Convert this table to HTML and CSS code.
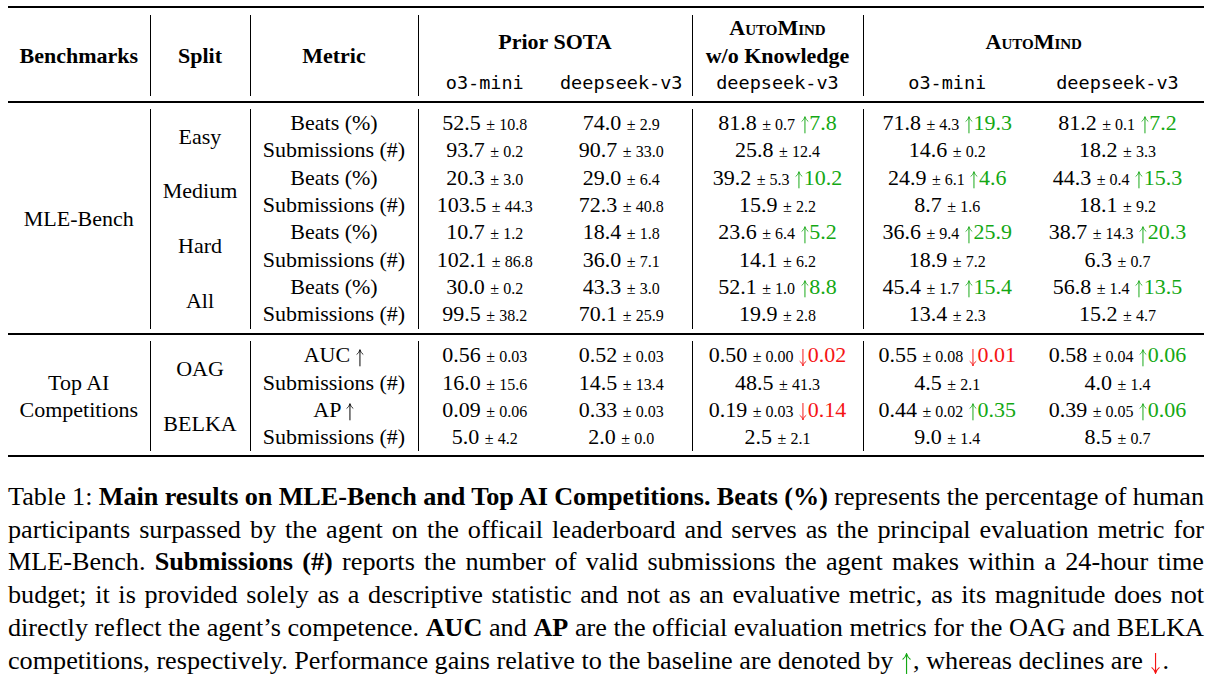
FILE: index.html
```html
<!DOCTYPE html>
<html>
<head>
<meta charset="utf-8">
<link rel="stylesheet" href="styles.css">
</head>
<body>
<svg width="0" height="0" class="defs" aria-hidden="true">
  <defs>
    <symbol id="arrow-up" viewBox="0 0 8 18">
      <path d="M4 1.2V18" fill="none" stroke="currentColor" stroke-width="1"/>
      <path d="M0.6 5.6C2.2 4.4 3.4 2.8 4 0.6C4.6 2.8 5.8 4.4 7.4 5.6" fill="none" stroke="currentColor" stroke-width="0.9"/>
    </symbol>
    <symbol id="arrow-down" viewBox="0 0 8 18">
      <path d="M4 0V16.8" fill="none" stroke="currentColor" stroke-width="1"/>
      <path d="M0.6 12.4C2.2 13.6 3.4 15.2 4 17.4C4.6 15.2 5.8 13.6 7.4 12.4" fill="none" stroke="currentColor" stroke-width="0.9"/>
    </symbol>
  </defs>
</svg>
<table class="results">
  <colgroup>
    <col class="c-bench"><col class="c-split"><col class="c-metric"><col class="c-p1"><col class="c-p2"><col class="c-wo"><col class="c-a1"><col class="c-a2">
  </colgroup>
  <tbody>
    <tr class="rule"><td colspan="8"></td></tr>
    <tr class="gap"><td colspan="8"></td></tr>
    <tr>
      <th rowspan="3">Benchmarks</th>
      <th rowspan="3" class="vl">Split</th>
      <th rowspan="3" class="vl">Metric</th>
      <th rowspan="2" colspan="2" class="vl">Prior SOTA</th>
      <th class="vl sc top">AutoMind</th>
      <th rowspan="2" colspan="2" class="vl sc">AutoMind</th>
    </tr>
    <tr><th class="vl">w/o Knowledge</th></tr>
    <tr>
      <td class="vl mono">o3-mini</td><td class="mono">deepseek-v3</td>
      <td class="vl mono">deepseek-v3</td>
      <td class="vl mono">o3-mini</td><td class="mono">deepseek-v3</td>
    </tr>
    <tr class="gap short"><td colspan="8"></td></tr>
    <tr class="rule"><td colspan="8"></td></tr>
    <tr class="gap"><td colspan="8"></td></tr>

    <tr>
      <td rowspan="8">MLE-Bench</td>
      <td rowspan="2" class="vl">Easy</td>
      <td class="vl">Beats (%)</td>
      <td class="vl">52.5 <small>± 10.8</small></td><td>74.0 <small>± 2.9</small></td>
      <td class="vl">81.8 <small>± 0.7</small> <span class="up"><svg class="arr"><use href="#arrow-up"/></svg>7.8</span></td>
      <td class="vl">71.8 <small>± 4.3</small> <span class="up"><svg class="arr"><use href="#arrow-up"/></svg>19.3</span></td><td>81.2 <small>± 0.1</small> <span class="up"><svg class="arr"><use href="#arrow-up"/></svg>7.2</span></td>
    </tr>
    <tr>
      <td class="vl">Submissions (#)</td>
      <td class="vl">93.7 <small>± 0.2</small></td><td>90.7 <small>± 33.0</small></td>
      <td class="vl">25.8 <small>± 12.4</small></td>
      <td class="vl">14.6 <small>± 0.2</small></td><td>18.2 <small>± 3.3</small></td>
    </tr>
    <tr>
      <td rowspan="2" class="vl">Medium</td>
      <td class="vl">Beats (%)</td>
      <td class="vl">20.3 <small>± 3.0</small></td><td>29.0 <small>± 6.4</small></td>
      <td class="vl">39.2 <small>± 5.3</small> <span class="up"><svg class="arr"><use href="#arrow-up"/></svg>10.2</span></td>
      <td class="vl">24.9 <small>± 6.1</small> <span class="up"><svg class="arr"><use href="#arrow-up"/></svg>4.6</span></td><td>44.3 <small>± 0.4</small> <span class="up"><svg class="arr"><use href="#arrow-up"/></svg>15.3</span></td>
    </tr>
    <tr>
      <td class="vl">Submissions (#)</td>
      <td class="vl">103.5 <small>± 44.3</small></td><td>72.3 <small>± 40.8</small></td>
      <td class="vl">15.9 <small>± 2.2</small></td>
      <td class="vl">8.7 <small>± 1.6</small></td><td>18.1 <small>± 9.2</small></td>
    </tr>
    <tr>
      <td rowspan="2" class="vl">Hard</td>
      <td class="vl">Beats (%)</td>
      <td class="vl">10.7 <small>± 1.2</small></td><td>18.4 <small>± 1.8</small></td>
      <td class="vl">23.6 <small>± 6.4</small> <span class="up"><svg class="arr"><use href="#arrow-up"/></svg>5.2</span></td>
      <td class="vl">36.6 <small>± 9.4</small> <span class="up"><svg class="arr"><use href="#arrow-up"/></svg>25.9</span></td><td>38.7 <small>± 14.3</small> <span class="up"><svg class="arr"><use href="#arrow-up"/></svg>20.3</span></td>
    </tr>
    <tr>
      <td class="vl">Submissions (#)</td>
      <td class="vl">102.1 <small>± 86.8</small></td><td>36.0 <small>± 7.1</small></td>
      <td class="vl">14.1 <small>± 6.2</small></td>
      <td class="vl">18.9 <small>± 7.2</small></td><td>6.3 <small>± 0.7</small></td>
    </tr>
    <tr>
      <td rowspan="2" class="vl">All</td>
      <td class="vl">Beats (%)</td>
      <td class="vl">30.0 <small>± 0.2</small></td><td>43.3 <small>± 3.0</small></td>
      <td class="vl">52.1 <small>± 1.0</small> <span class="up"><svg class="arr"><use href="#arrow-up"/></svg>8.8</span></td>
      <td class="vl">45.4 <small>± 1.7</small> <span class="up"><svg class="arr"><use href="#arrow-up"/></svg>15.4</span></td><td>56.8 <small>± 1.4</small> <span class="up"><svg class="arr"><use href="#arrow-up"/></svg>13.5</span></td>
    </tr>
    <tr class="last">
      <td class="vl">Submissions (#)</td>
      <td class="vl">99.5 <small>± 38.2</small></td><td>70.1 <small>± 25.9</small></td>
      <td class="vl">19.9 <small>± 2.8</small></td>
      <td class="vl">13.4 <small>± 2.3</small></td><td>15.2 <small>± 4.7</small></td>
    </tr>

    <tr class="gap short"><td colspan="8"></td></tr>
    <tr class="rule"><td colspan="8"></td></tr>
    <tr class="gap"><td colspan="8"></td></tr>

    <tr>
      <td rowspan="4">Top AI<br>Competitions</td>
      <td rowspan="2" class="vl">OAG</td>
      <td class="vl">AUC <svg class="arr"><use href="#arrow-up"/></svg></td>
      <td class="vl">0.56 <small>± 0.03</small></td><td>0.52 <small>± 0.03</small></td>
      <td class="vl">0.50 <small>± 0.00</small> <span class="down"><svg class="arr"><use href="#arrow-down"/></svg>0.02</span></td>
      <td class="vl">0.55 <small>± 0.08</small> <span class="down"><svg class="arr"><use href="#arrow-down"/></svg>0.01</span></td><td>0.58 <small>± 0.04</small> <span class="up"><svg class="arr"><use href="#arrow-up"/></svg>0.06</span></td>
    </tr>
    <tr>
      <td class="vl">Submissions (#)</td>
      <td class="vl">16.0 <small>± 15.6</small></td><td>14.5 <small>± 13.4</small></td>
      <td class="vl">48.5 <small>± 41.3</small></td>
      <td class="vl">4.5 <small>± 2.1</small></td><td>4.0 <small>± 1.4</small></td>
    </tr>
    <tr>
      <td rowspan="2" class="vl">BELKA</td>
      <td class="vl">AP <svg class="arr"><use href="#arrow-up"/></svg></td>
      <td class="vl">0.09 <small>± 0.06</small></td><td>0.33 <small>± 0.03</small></td>
      <td class="vl">0.19 <small>± 0.03</small> <span class="down"><svg class="arr"><use href="#arrow-down"/></svg>0.14</span></td>
      <td class="vl">0.44 <small>± 0.02</small> <span class="up"><svg class="arr"><use href="#arrow-up"/></svg>0.35</span></td><td>0.39 <small>± 0.05</small> <span class="up"><svg class="arr"><use href="#arrow-up"/></svg>0.06</span></td>
    </tr>
    <tr>
      <td class="vl">Submissions (#)</td>
      <td class="vl">5.0 <small>± 4.2</small></td><td>2.0 <small>± 0.0</small></td>
      <td class="vl">2.5 <small>± 2.1</small></td>
      <td class="vl">9.0 <small>± 1.4</small></td><td>8.5 <small>± 0.7</small></td>
    </tr>

    <tr class="gap short"><td colspan="8"></td></tr>
    <tr class="rule"><td colspan="8"></td></tr>
  </tbody>
</table>

<p class="caption">
  <span class="ln tight">Table 1: <b>Main results on MLE-Bench and Top AI Competitions. Beats (%)</b> represents the percentage of human</span>
  <span class="ln">participants surpassed by the agent on the officail leaderboard and serves as the principal evaluation metric for</span>
  <span class="ln">MLE-Bench. <b>Submissions (#)</b> reports the number of valid submissions the agent makes within a 24-hour time</span>
  <span class="ln">budget; it is provided solely as a descriptive statistic and not as an evaluative metric, as its magnitude does not</span>
  <span class="ln">directly reflect the agent’s competence. <b>AUC</b> and <b>AP</b> are the official evaluation metrics for the OAG and BELKA</span>
  <span class="ln end">competitions, respectively. Performance gains relative to the baseline are denoted by <span class="up"><svg class="arr"><use href="#arrow-up"/></svg></span>, whereas declines are <span class="down"><svg class="arr"><use href="#arrow-down"/></svg></span>.</span>
</p>
</body>
</html>
```

FILE: styles.css
```css
html, body {
  background: #fff;
}
body {
  margin: 0;
  padding: 6px 9px 0 8px;
  font-family: "Liberation Serif", "Times New Roman", serif;
  color: #000;
}
.defs {
  position: absolute;
  width: 0;
  height: 0;
  overflow: hidden;
}
.results {
  width: 1196px;
  border-collapse: collapse;
  table-layout: fixed;
  font-size: 22px;
}
.c-bench { width: 142px; }
.c-split { width: 100px; }
.c-metric { width: 168px; }
.c-p1 { width: 133px; }
.c-p2 { width: 141px; }
.c-wo { width: 171px; }
.c-a1 { width: 168px; }
.c-a2 { width: 173px; }

.results td, .results th {
  padding: 0;
  height: 27.3px;
  line-height: 27.3px;
  text-align: center;
  vertical-align: middle;
  white-space: nowrap;
}
.results th { font-weight: bold; }
.results th.top { vertical-align: top; line-height: 25px; }
.results .vl { border-left: 1px solid #000; }
.results .sc { font-variant: small-caps; }
.results .mono {
  font-family: "DejaVu Sans Mono", "Liberation Mono", monospace;
  font-size: 18.5px;
}
.results small {
  font-size: 16px;
  line-height: 1;
}
.results .last td { height: 28.6px; vertical-align: top; }

.arr {
  display: inline-block;
  width: 0.36em;
  height: 0.8em;
  vertical-align: -0.18em;
  margin: 0 0.03em 0 0;
  overflow: visible;
}

.results .rule td {
  height: 2px;
  padding: 0;
  line-height: 0;
  font-size: 0;
  background: #000;
}
.results .gap td {
  height: 6.5px;
  padding: 0;
  line-height: 0;
  font-size: 0;
}
.results .gap.short td { height: 4.2px; }

.up { color: #14a814; }
.down { color: #f51414; }

.caption {
  margin: 24px 0 0 0;
  font-size: 26.2px;
  line-height: 32.8px;
}
.caption .ln {
  display: block;
  text-align: justify;
  text-align-last: justify;
}
.caption .ln.tight { word-spacing: -1px; }
.caption .ln.end { text-align-last: left; }
.caption .arr {
  width: 0.5em;
  margin: 0;
}
```
